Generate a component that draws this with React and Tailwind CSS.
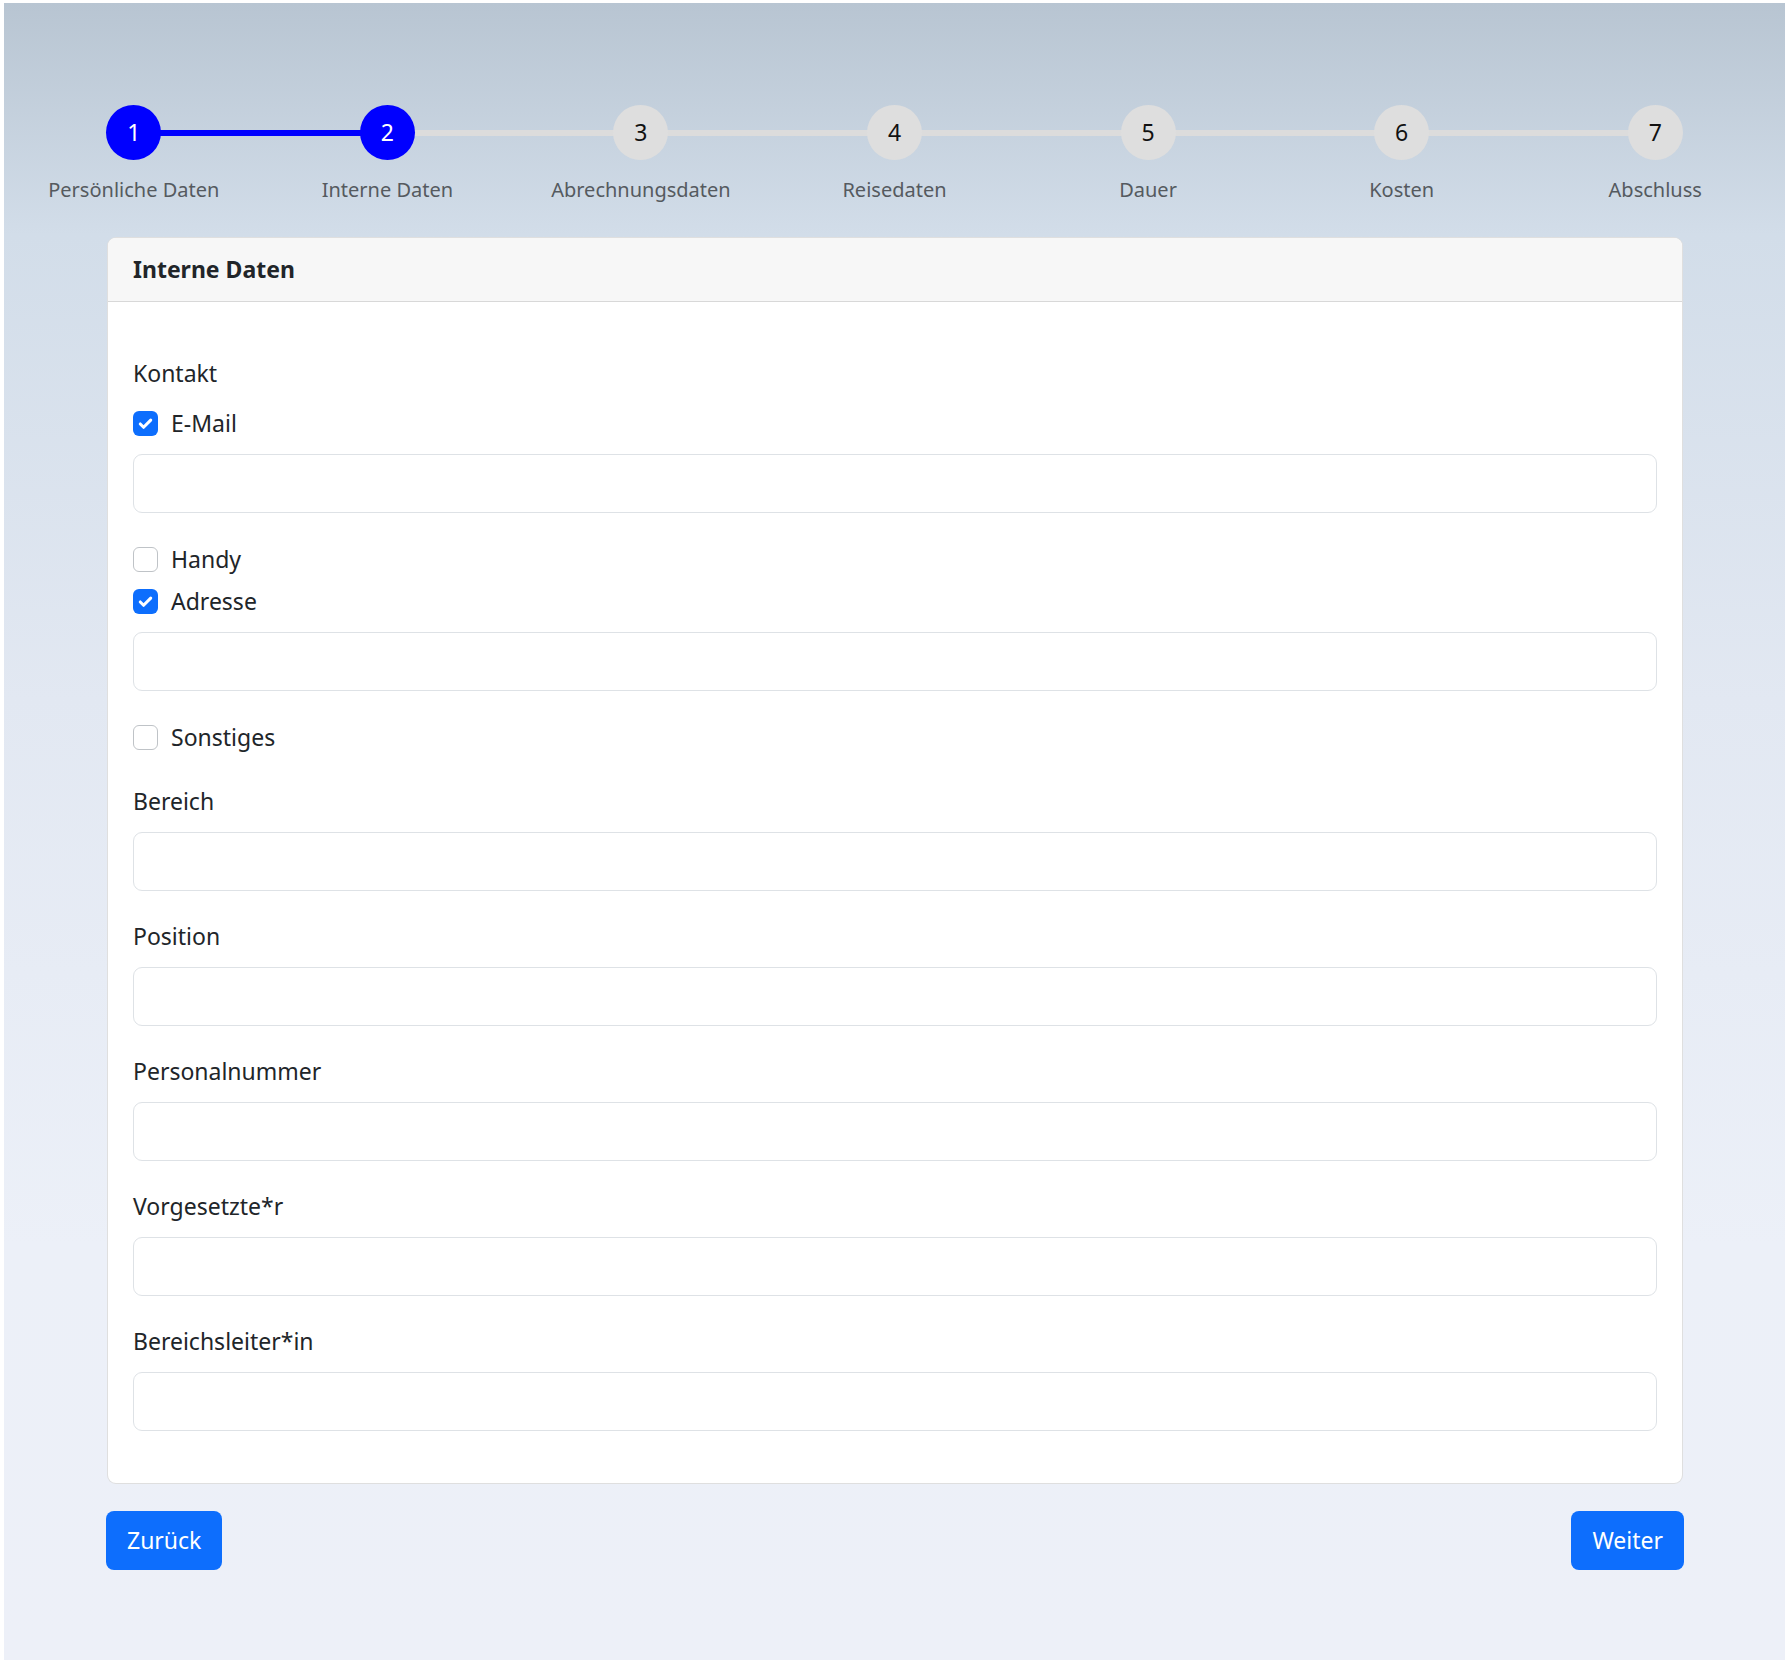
import React from 'react';

const steps = ['Persönliche Daten', 'Interne Daten', 'Abrechnungsdaten', 'Reisedaten', 'Dauer', 'Kosten', 'Abschluss'];
const current = 2;

function Check({ checked }) {
    return checked ? (
        <span className="w-[25px] h-[25px] rounded-[6px] bg-[#0d6efd] flex items-center justify-center shrink-0">
            <svg width="19" height="19" viewBox="0 0 20 20" fill="none"><path d="M4.5 10.5l3.5 3.5L15.5 6.5" stroke="white" strokeWidth="3.2" strokeLinecap="round" strokeLinejoin="round" /></svg>
        </span>
    ) : (
        <span className="w-[25px] h-[25px] rounded-[6px] bg-white border border-[#bfc3c7] shrink-0" />
    );
}

function CheckRow({ label, checked, className = '' }) {
    return (
        <div className={`flex items-center gap-[13px] h-[36px] ${className}`}>
            <Check checked={checked} />
            <span>{label}</span>
        </div>
    );
}

function Input({ className = '' }) {
    return <div className={`h-[59px] bg-white border border-[#dee2e6] rounded-[9px] ${className}`} />;
}

function Field({ label }) {
    return (
        <div className="mb-[27px]">
            <div className="h-[36px] leading-[36px] mb-[13px]">{label}</div>
            <Input />
        </div>
    );
}

export default function App() {
    return (
        <div className="bg-white pt-[3px] pl-[4px] pr-[4px] pb-[4px]" style={{ fontFamily: '"Noto Sans", "Open Sans", sans-serif' }}>
            <div className="h-[1657px] bg-[linear-gradient(180deg,#b8c5d2_0%,#d2dde9_14%,#e2e8f2_42%,#ecf0f8_75%,#edf0f8_100%)]">

                {/* Stepper */}
                <div className="grid grid-cols-7 px-[3px] pt-[102px]">
                    {steps.map((s, i) => {
                        const n = i + 1;
                        const done = n <= current;
                        return (
                            <div key={s} className="relative flex flex-col items-center">
                                {n < steps.length && (
                                    <div className={`absolute top-[24.5px] left-1/2 w-full h-[6px] ${n < current ? 'bg-[#0000ff]' : 'bg-[#dcdcdc]'}`} />
                                )}
                                <div className={`relative z-10 w-[55px] h-[55px] rounded-full flex items-center justify-center text-[23px] ${done ? 'bg-[#0000ff] text-white' : 'bg-[#dedede] text-[#111]'}`}>
                                    {n}
                                </div>
                                <div className="mt-[14px] text-[20px] leading-[31px] text-[#555a5f]">{s}</div>
                            </div>
                        );
                    })}
                </div>

                {/* Card */}
                <div className="ml-[103px] w-[1576px] mt-[32px] bg-white border border-black/[.125] rounded-[9px] text-[23px] text-[#212529] overflow-hidden">
                    <div className="h-[64px] px-[25px] flex items-center bg-[#f7f7f7] border-b border-black/[.125] font-bold">Interne Daten</div>
                    <div className="px-[25px] pt-[53px] pb-[25px]">
                        <div className="h-[36px] leading-[36px]">Kontakt</div>
                        <CheckRow label="E-Mail" checked className="mt-[14px]" />
                        <Input className="mt-[13px]" />
                        <CheckRow label="Handy" className="mt-[28px]" />
                        <CheckRow label="Adresse" checked className="mt-[6px]" />
                        <Input className="mt-[13px]" />
                        <CheckRow label="Sonstiges" className="mt-[28px] mb-[28px]" />
                        <Field label="Bereich" />
                        <Field label="Position" />
                        <Field label="Personalnummer" />
                        <Field label="Vorgesetzte*r" />
                        <Field label="Bereichsleiter*in" />
                    </div>
                </div>

                {/* Buttons */}
                <div className="ml-[102px] w-[1578px] mt-[27px] flex justify-between">
                    <button className="h-[59px] px-[21px] bg-[#0d6efd] text-white text-[23px] rounded-[8px]">Zurück</button>
                    <button className="h-[59px] px-[21px] bg-[#0d6efd] text-white text-[23px] rounded-[8px]">Weiter</button>
                </div>
            </div>
        </div>
    );
}
